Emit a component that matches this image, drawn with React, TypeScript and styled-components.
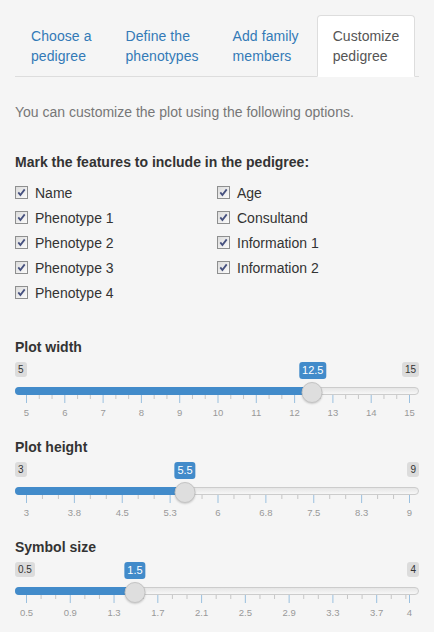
import React from "react";
import styled, { createGlobalStyle } from "styled-components";

const GlobalStyle = createGlobalStyle`
  html, body {
    margin: 0;
    padding: 0;
    background: #f5f5f5;
  }
  body {
    font-family: "Liberation Sans", Arial, sans-serif;
    font-size: 14px;
    line-height: 20px;
    color: #333;
  }
`;

const Panel = styled.div`
  display: flex;
  flex-direction: column;
  padding: 15px;
  min-height: 632px;
  box-sizing: border-box;
  background: #f5f5f5;
`;

// tabs
const Tabs = styled.ul`
  display: flex;
  margin: 0;
  padding: 0;
  list-style: none;
  border-bottom: 1px solid #ddd;
`;

const Tab = styled.li<{ $active?: boolean }>`
  display: flex;
  flex-direction: column;
  margin: 0 2px -1px 0;
  padding: 10px 15px;
  border: 1px solid ${({ $active }) => ($active ? "#ddd" : "transparent")};
  border-bottom-color: ${({ $active }) => ($active ? "#fff" : "transparent")};
  border-radius: 4px 4px 0 0;
  background: ${({ $active }) => ($active ? "#fff" : "transparent")};
  color: ${({ $active }) => ($active ? "#555" : "#337ab7")};
  letter-spacing: 0.07px;
  cursor: pointer;
`;

const TabLine = styled.span`
  white-space: nowrap;
`;

const Intro = styled.p`
  margin: 25px 0 30px;
  color: #777;
`;

const FieldLabel = styled.div`
  font-weight: bold;
  margin-bottom: 8px;
`;

// checkboxes
const CheckGrid = styled.div`
  display: grid;
  grid-template-columns: 1fr 1fr;
`;

const CheckColumn = styled.div`
  display: flex;
  flex-direction: column;
`;

const CheckRow = styled.label`
  display: flex;
  align-items: center;
  height: 25px;
  gap: 7px;
  cursor: pointer;
`;

const Box = styled.span`
  display: flex;
  align-items: center;
  justify-content: center;
  width: 13px;
  height: 13px;
  box-sizing: border-box;
  border: 1px solid #8e8f8f;
  background: linear-gradient(135deg, #dcdcdc, #fbfbfb);
  flex: none;
`;

const Check = ({ label }: { label: string }) => (
  <CheckRow>
    <Box>
      <svg width="11" height="11" viewBox="0 0 11 11">
        <path d="M2.3 5.4 L4.4 8 L8.7 2.4" fill="none" stroke="#46517f" strokeWidth="1.8" />
      </svg>
    </Box>
    {label}
  </CheckRow>
);

// sliders
const SliderBlock = styled.div`
  display: flex;
  flex-direction: column;
  margin-top: 32px;

  & + & {
    margin-top: 15px;
  }
`;

const SliderLabel = styled.div`
  font-weight: bold;
  margin-bottom: 5px;
`;

const TagRow = styled.div`
  position: relative;
  display: flex;
  justify-content: space-between;
  align-items: flex-start;
  height: 25px;
`;

const EdgeTag = styled.span`
  padding: 1px 3px;
  font-size: 10px;
  line-height: 13px;
  color: #333;
  background: rgba(0, 0, 0, 0.1);
  border-radius: 3px;
`;

// value bubble sits over the tag row at the handle position
const ValueTag = styled.span`
  position: absolute;
  top: 0;
  transform: translateX(-50%);
  padding: 1px 3px;
  font-size: 11px;
  line-height: 15px;
  color: #fff;
  background: #428bca;
  border-radius: 3px;
  white-space: nowrap;
`;

const Track = styled.div`
  position: relative;
  display: flex;
  height: 8px;
  box-sizing: border-box;
  border: 1px solid #ccc;
  border-radius: 16px;
  background: linear-gradient(to bottom, #ddd -50%, #fff 150%);
`;

const Bar = styled.div`
  margin: -1px 0 -1px -1px;
  background: #428bca;
  border-radius: 16px 0 0 16px;
`;

const Handle = styled.div`
  position: absolute;
  top: -6px;
  width: 21px;
  height: 21px;
  box-sizing: border-box;
  transform: translateX(-50%);
  background: #dedede;
  border: 1px solid #c4c4c4;
  border-radius: 50%;
  box-shadow: 0 1px 2px rgba(0, 0, 0, 0.18);
`;

const GridWrap = styled.div`
  padding: 0 10.5px;
  height: 27px;

  svg {
    display: block;
    overflow: visible;
  }
`;

type SliderProps = {
  label: string;
  min: number;
  max: number;
  value: number;
  marks: { v: number; text: string }[];
};

const Slider = ({ label, min, max, value, marks }: SliderProps) => {
  const frac = (v: number) => (v - min) / (max - min);
  const at = (v: number) => `calc(10.5px + ${frac(v)} * (100% - 21px))`;
  const step = marks[1].v - marks[0].v;
  const minor: number[] = [];
  for (let i = 0; i < marks.length - 1; i++) {
    for (let k = 1; k <= 2; k++) {
      const v = marks[i].v + (step * k) / 3;
      if (v < marks[i + 1].v - step * 0.05) minor.push(v);
    }
  }
  return (
    <SliderBlock>
      <SliderLabel>{label}</SliderLabel>
      <TagRow>
        <EdgeTag>{min}</EdgeTag>
        <EdgeTag>{max}</EdgeTag>
        <ValueTag style={{ left: at(value) }}>{value}</ValueTag>
      </TagRow>
      <Track>
        <Bar style={{ width: at(value) }} />
        <Handle style={{ left: at(value) }} />
      </Track>
      <GridWrap>
        <svg width="100%" height="27">
          {minor.map((v) => (
            <rect key={"m" + v} x={`${frac(v) * 100}%`} y="0" width="1" height="4" fill="#999" opacity="0.5" />
          ))}
          {marks.map((m) => (
            <g key={m.text}>
              <rect x={`${frac(m.v) * 100}%`} y="0" width="1" height="8" fill="#428bca" opacity="0.5" />
              <text
                x={`${frac(m.v) * 100}%`}
                dx="0.5"
                y="20.5"
                textAnchor="middle"
                fontSize="9.5"
                fill="#999"
                fontFamily="'Liberation Sans', Arial, sans-serif"
              >
                {m.text}
              </text>
            </g>
          ))}
        </svg>
      </GridWrap>
    </SliderBlock>
  );
};

const widthMarks = Array.from({ length: 11 }, (_, i) => ({ v: 5 + i, text: String(5 + i) }));
const heightMarks = ["3", "3.8", "4.5", "5.3", "6", "6.8", "7.5", "8.3", "9"].map((t, i) => ({
  v: 3 + i * 0.75,
  text: t,
}));
const symbolMarks = [
  ...Array.from({ length: 9 }, (_, i) => {
    const v = 0.5 + i * 0.4;
    return { v, text: String(Math.round(v * 10) / 10) };
  }),
  { v: 4, text: "4" },
];

const tabs = [
  ["Choose a", "pedigree"],
  ["Define the", "phenotypes"],
  ["Add family", "members"],
  ["Customize", "pedigree"],
];

const leftChecks = ["Name", "Phenotype 1", "Phenotype 2", "Phenotype 3", "Phenotype 4"];
const rightChecks = ["Age", "Consultand", "Information 1", "Information 2"];

export default function App() {
  return (
    <>
      <GlobalStyle />
      <Panel>
        <Tabs>
          {tabs.map((lines, i) => (
            <Tab key={i} $active={i === tabs.length - 1}>
              {lines.map((l) => (
                <TabLine key={l}>{l}</TabLine>
              ))}
            </Tab>
          ))}
        </Tabs>
        <Intro>You can customize the plot using the following options.</Intro>
        <FieldLabel>Mark the features to include in the pedigree:</FieldLabel>
        <CheckGrid>
          <CheckColumn>
            {leftChecks.map((c) => (
              <Check key={c} label={c} />
            ))}
          </CheckColumn>
          <CheckColumn>
            {rightChecks.map((c) => (
              <Check key={c} label={c} />
            ))}
          </CheckColumn>
        </CheckGrid>
        <Slider label="Plot width" min={5} max={15} value={12.5} marks={widthMarks} />
        <Slider label="Plot height" min={3} max={9} value={5.5} marks={heightMarks} />
        <Slider label="Symbol size" min={0.5} max={4} value={1.5} marks={symbolMarks} />
      </Panel>
    </>
  );
}
